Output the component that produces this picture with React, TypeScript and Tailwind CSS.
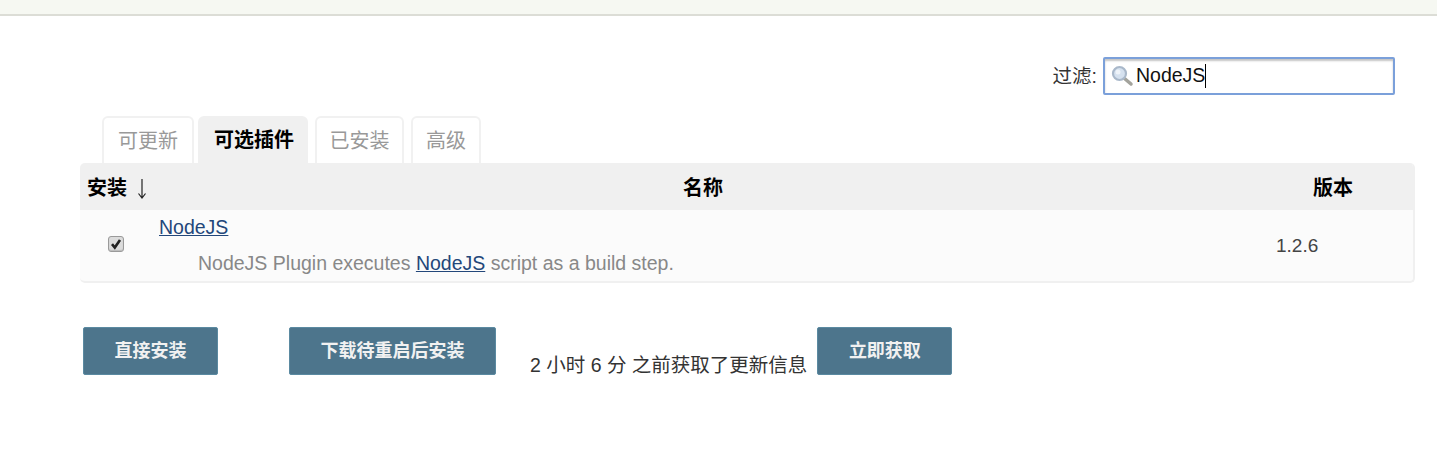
import React from "react";

const font = "font-['Liberation_Sans','Noto_Sans_CJK_SC',sans-serif]";

const tabs = [
  { label: "可更新", active: false, className: "w-[92px]" },
  { label: "可选插件", active: true, className: "ml-[4px] w-[110px] pl-[2px]" },
  { label: "已安装", active: false, className: "ml-[7px] w-[89px]" },
  { label: "高级", active: false, className: "ml-[7px] w-[70px]" },
];

const SearchIcon = () => (
  <svg width="24" height="24" viewBox="0 0 24 24" className="shrink-0">
    <path d="M14.5 14.5l6.5 5.5" stroke="#a3a39c" strokeWidth="3.5" strokeLinecap="round" />
    <circle cx="9.5" cy="9.5" r="6.5" fill="#d5e1ef" stroke="#a9b8ca" strokeWidth="2.2" />
    <circle cx="8" cy="8" r="2.5" fill="#eef3f9" />
  </svg>
);

const ActionButton = ({ label, width }: { label: string; width: string }) => (
  <button
    type="button"
    className={`${width} h-[48px] shrink-0 rounded-[2px] border border-[#5b8aa1] bg-[#4d758c] text-[18px] font-bold text-[#f1f1f1]`}
  >
    {label}
  </button>
);

export default function App() {
  return (
    <div className={`${font} h-[453px] w-[1437px] overflow-hidden bg-white text-[#333]`}>
      <div className="h-[16px] border-b-2 border-[#dcddd6] bg-[#f6f8f2]" />

      {/* Filter */}
      <div className="flex items-center justify-end pr-[42px] pt-[41px]">
        <span className="mr-[6px] pt-[2px] text-[19.5px]">过滤:</span>
        <div className="flex h-[38px] w-[292px] items-center rounded-[2px] border-2 border-[#7ba0da] pl-[5px] shadow-[inset_0_2px_2px_#c4c4c4]">
          <SearchIcon />
          <span className="ml-[2px] text-[19.5px] leading-none text-[#111]">NodeJS</span>
          <span className="h-[24px] w-px bg-black" />
        </div>
      </div>

      {/* Tabs */}
      <div className="flex pl-[102px] pt-[21px]">
        {tabs.map((tab) => (
          <div
            key={tab.label}
            className={`flex h-[47px] ${tab.className} items-center justify-center rounded-t-[6px] text-[20px] ${
              tab.active
                ? "bg-[#f0f0f0] font-bold text-black"
                : "border-2 border-b-0 border-[#f1f1f1] text-[#999]"
            }`}
          >
            {tab.label}
          </div>
        ))}
      </div>

      {/* Plugin table */}
      <div className="ml-[80px] w-[1335px] overflow-hidden rounded-[5px] border-b-2 border-r-2 border-[#f0f0f0] bg-[#fbfbfb]">
        <div className="flex h-[47px] items-center bg-[#f0f0f0] pt-[2px] text-[20px] font-bold text-black">
          <div className="flex w-[79px] items-center pl-[7px]">
            安装
            <svg width="10" height="20" viewBox="0 0 10 20" className="ml-[10px] mt-[2px]">
              <path d="M5 0v18M1.5 14.5L5 19l3.5-4.5" fill="none" stroke="#222" strokeWidth="1.2" />
            </svg>
          </div>
          <div className="flex-1 pr-[6px] text-center">名称</div>
          <div className="w-[160px] text-center">版本</div>
        </div>
        <div className="flex h-[71px]">
          <div className="flex w-[79px] items-center justify-center pb-[4px] pr-[7px]">
            <span className="flex h-[16px] w-[16px] items-center justify-center rounded-[3px] border border-[#9a9a9a] bg-[#dcdcdc] shadow-[inset_0_-1px_1px_#bbb]">
              <svg width="12" height="12" viewBox="0 0 12 12">
                <path d="M2 6.2l2.8 3.4L10 2" fill="none" stroke="#222" strokeWidth="2.6" />
              </svg>
            </span>
          </div>
          <div className="flex-1 text-[19.5px]">
            <div className="pt-[3px]">
              <a href="#" className="text-[#23477a] underline">
                NodeJS
              </a>
            </div>
            <div className="pl-[39px] pt-[7px] text-[#888]">
              NodeJS Plugin executes{" "}
              <a href="#" className="text-[#23477a] underline">
                NodeJS
              </a>{" "}
              script as a build step.
            </div>
          </div>
          <div className="w-[137px] pt-[22px] text-[19px] text-[#444]">1.2.6</div>
        </div>
      </div>

      {/* Actions */}
      <div className="flex items-end pl-[83px] pt-[44px]">
        <ActionButton label="直接安装" width="w-[135px]" />
        <div className="w-[71px]" />
        <ActionButton label="下载待重启后安装" width="w-[207px]" />
        <span className="ml-[34px] mr-[10px] text-[19.5px] leading-none">2 小时 6 分 之前获取了更新信息</span>
        <ActionButton label="立即获取" width="w-[135px]" />
      </div>
    </div>
  );
}
